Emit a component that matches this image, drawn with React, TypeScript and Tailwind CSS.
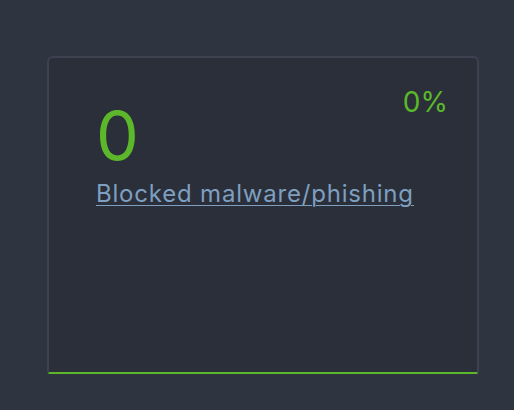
import React from "react";

export default function App() {
  return (
    <div className="w-[514px] h-[410px] bg-[#2f3441] pt-[56px] pl-[47px]" style={{ fontFamily: "Inter, 'Noto Sans', sans-serif" }}>
      <div className="relative w-[432px] h-[318px] rounded-t-[6px] rounded-b-[3px] border-2 border-[#3d4250] border-b-[#5cb82a] bg-[#2a2f3a]">
        <div className="absolute right-[29px] top-[30px] text-[28px] leading-none text-[#5cb82a]">0%</div>
        <div className="pl-[47px] pt-[43px]">
          <div className="text-[68px] leading-[68px] text-[#5cb82a]">0</div>
          <a href="#" className="mt-[10px] inline-block text-[24px] leading-[30px] tracking-[0.8px] text-[#7f9fc0] underline underline-offset-[3px] decoration-1">
            Blocked malware/phishing
          </a>
        </div>
      </div>
    </div>
  );
}
